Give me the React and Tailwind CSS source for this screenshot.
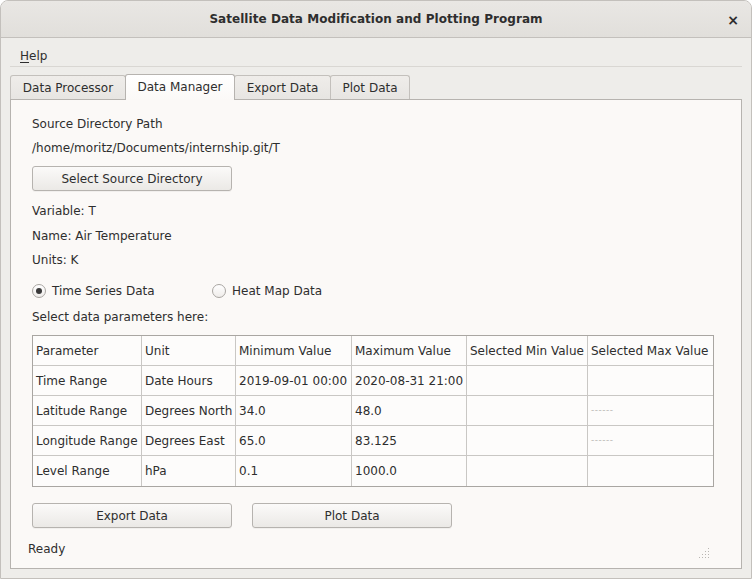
import React, { useState } from "react";

const tabs = ["Data Processor", "Data Manager", "Export Data", "Plot Data"];
const tabWidths = ["w-[116px]", "w-[110px]", "w-[97px]", "w-[80px]"];

const cols = ["w-[109px]", "w-[94px]", "w-[116px]", "w-[115px]", "w-[121px]", "w-[125px]"];

const rows = [
  ["Parameter", "Unit", "Minimum Value", "Maximum Value", "Selected Min Value", "Selected Max Value"],
  ["Time Range", "Date Hours", "2019-09-01 00:00", "2020-08-31 21:00", "", ""],
  ["Latitude Range", "Degrees North", "34.0", "48.0", "", "------"],
  ["Longitude Range", "Degrees East", "65.0", "83.125", "", "------"],
  ["Level Range", "hPa", "0.1", "1000.0", "", ""],
];

const Button = ({ children }) => (
  <button className="w-[200px] h-[25px] rounded-[3px] border border-[#b6b3af] bg-gradient-to-b from-[#fbfaf9] to-[#ebe9e6] text-[12px] text-[#2e2e2e] shadow-[0_1px_0_rgba(0,0,0,0.04)]">
    {children}
  </button>
);

const Radio = ({ checked, label, onClick }) => (
  <button onClick={onClick} className="flex items-center gap-[6px]">
    <span className="w-[14px] h-[14px] rounded-full border border-[#a9a6a2] bg-gradient-to-b from-[#ffffff] to-[#efedea] flex items-center justify-center">
      {checked && <span className="w-[6px] h-[6px] rounded-full bg-[#3a3a3a]" />}
    </span>
    <span>{label}</span>
  </button>
);

export default function App() {
  const [mode, setMode] = useState("time");
  const [tab, setTab] = useState(1);

  return (
    <div
      className="w-[752px] h-[579px] flex flex-col bg-[#eeedea] border border-[#c3c0bc] rounded-t-[8px] overflow-hidden text-[12px] text-[#2e2e2e]"
      style={{ fontFamily: '"DejaVu Sans", "Liberation Sans", sans-serif' }}
    >
      {/* Title bar */}
      <div className="h-[37px] shrink-0 flex items-center justify-center relative bg-gradient-to-b from-[#e9e7e4] to-[#e1dfdb] border-b border-[#c3c0bc]">
        <span className="font-bold text-[12px] tracking-[0.05px] text-[#2e2e2e]">Satellite Data Modification and Plotting Program</span>
        <span className="absolute right-[12px] top-[9px] font-bold text-[14px] text-[#2e2e2e]">×</span>
      </div>

      {/* Menu */}
      <div className="mx-[9px] h-[29px] shrink-0 flex items-center border-b border-[#d9d7d3] pt-[8px]">
        <span className="pl-[10px]">
          <span className="underline underline-offset-2">H</span>elp
        </span>
      </div>

      {/* Tabs */}
      <div className="mx-[9px] mt-[7px] flex items-end h-[25px] shrink-0">
        {tabs.map((t, i) =>
          i === tab ? (
            <div
              key={t}
              onClick={() => setTab(i)}
              className={`${tabWidths[i]} h-[26px] -mb-[1px] -ml-[1px] relative z-10 flex items-center justify-center rounded-t-[3px] border border-b-0 border-[#b6b3af] bg-gradient-to-b from-[#ffffff] to-[#fbf9f7] pb-[2px]`}
            >
              {t}
            </div>
          ) : (
            <div
              key={t}
              onClick={() => setTab(i)}
              className={`${tabWidths[i]} h-[24px] flex items-center justify-center rounded-t-[3px] border border-b-0 border-[#c3c0bc] bg-gradient-to-b from-[#efedea] to-[#e7e5e2] ${i > 0 ? "-ml-[1px]" : ""}`}
            >
              {t}
            </div>
          )
        )}
      </div>

      {/* Panel */}
      <div className="mx-[9px] mb-[9px] flex-1 bg-[#fbf9f7] border border-[#b6b3af] flex flex-col px-[21px] relative">
        <div className="mt-[16px] h-[16px] flex items-center">Source Directory Path</div>
        <div className="mt-[8px] h-[16px] flex items-center">/home/moritz/Documents/internship.git/T</div>
        <div className="mt-[10px]">
          <Button>Select Source Directory</Button>
        </div>
        <div className="mt-[12px] h-[16px] flex items-center">Variable: T</div>
        <div className="mt-[9px] h-[16px] flex items-center">Name: Air Temperature</div>
        <div className="mt-[8px] h-[16px] flex items-center">Units: K</div>

        <div className="mt-[15px] h-[16px] flex items-center">
          <div className="w-[180px]">
            <Radio checked={mode === "time"} label="Time Series Data" onClick={() => setMode("time")} />
          </div>
          <Radio checked={mode === "heat"} label="Heat Map Data" onClick={() => setMode("heat")} />
        </div>

        <div className="mt-[10px] h-[16px] flex items-center">Select data parameters here:</div>

        {/* Table */}
        <div className="mt-[10px] w-[682px] border border-[#a9a6a2] bg-[#fdfcfb]">
          {rows.map((r, ri) => (
            <div key={ri} className={`flex h-[30px] ${ri < rows.length - 1 ? "border-b border-[#c9c7c4]" : ""}`}>
              {r.map((c, ci) => (
                <div
                  key={ci}
                  className={`${cols[ci]} shrink-0 flex items-center px-[3px] whitespace-nowrap overflow-hidden ${ci < r.length - 1 ? "border-r border-[#c9c7c4]" : ""} ${
                    c === "------" ? "text-[9px] text-[#b8b6b3] tracking-[0.5px]" : ""
                  }`}
                >
                  {c}
                </div>
              ))}
            </div>
          ))}
        </div>

        <div className="mt-[16px] flex gap-[20px]">
          <Button>Export Data</Button>
          <Button>Plot Data</Button>
        </div>

        <div className="mt-[13px] -ml-[4px] h-[16px] flex items-center">Ready</div>

        {/* resize grip */}
        <svg className="absolute right-[30px] bottom-[8px]" width="12" height="12" viewBox="0 0 12 12">
          {[
            [9, 0],
            [6, 3], [9, 3],
            [3, 6], [6, 6], [9, 6],
            [0, 9], [3, 9], [6, 9], [9, 9],
          ].map(([x, y], i) => (
            <rect key={i} x={x} y={y} width="1" height="1" fill="#b9b6b2" />
          ))}
        </svg>
      </div>
    </div>
  );
}
